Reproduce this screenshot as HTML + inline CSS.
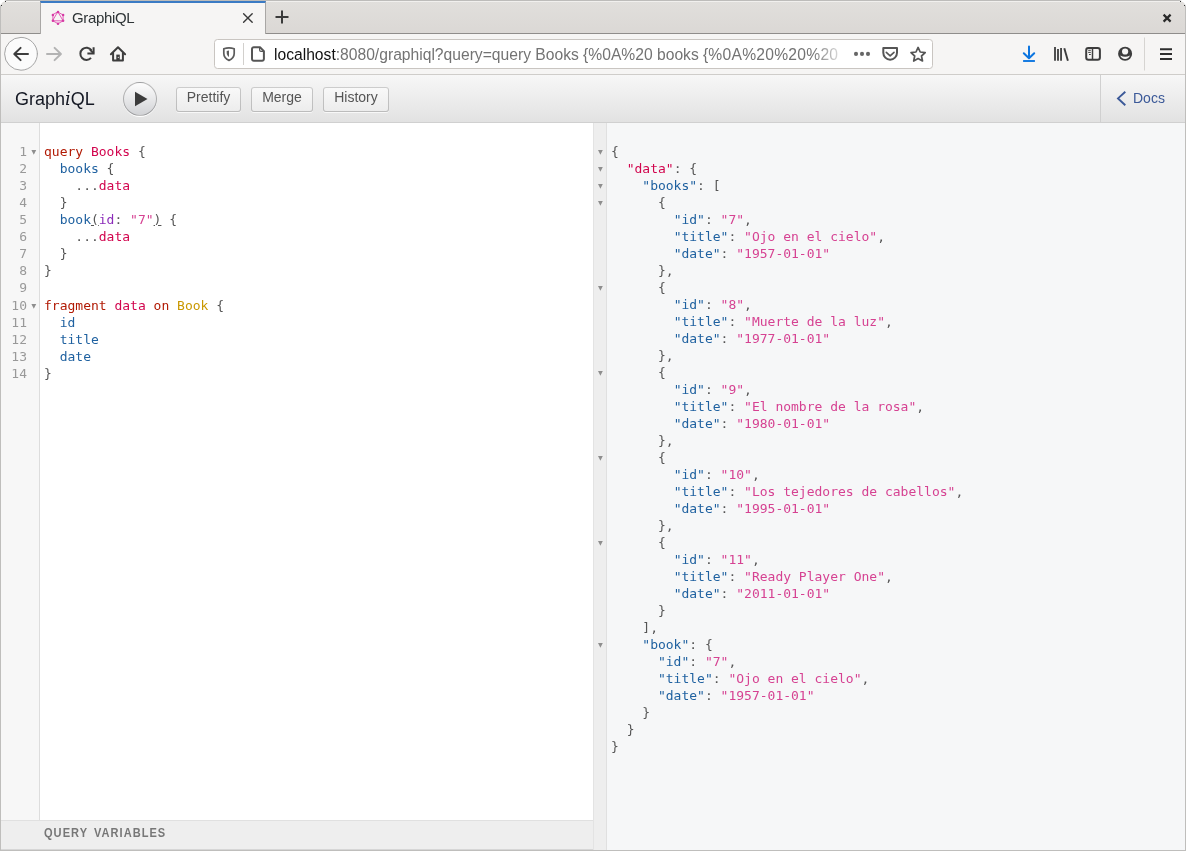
<!DOCTYPE html>
<html><head><meta charset="utf-8"><title>GraphiQL</title>
<style>
*{box-sizing:border-box;margin:0;padding:0}
html,body{width:1186px;height:851px;overflow:hidden;background:#fff;font-family:"Liberation Sans",sans-serif}
#win{position:absolute;left:0;top:0;width:1186px;height:851px;overflow:hidden;background:#fff;will-change:transform}
.abs{position:absolute}
/* browser chrome */
#tabbar{left:0;top:0;width:1186px;height:34px;background:linear-gradient(#e1dfdc,#dbd8d5);border-bottom:1px solid #8f8d8b;border-top:1px solid #bdbcba;box-shadow:inset 0 1px #f1f0ee}
#tab{left:40px;top:1px;width:226px;height:33px;background:#f6f5f4;border-top:2px solid #3b7bc4;border-left:1px solid #a9a7a5;border-right:1px solid #a9a7a5}
#tabtitle{left:72px;top:8.500px;font:15px "Liberation Sans",sans-serif;color:#2e3436;letter-spacing:-0.35px}
#navbar{left:0;top:34px;width:1186px;height:41px;background:#f6f5f4;border-bottom:1px solid #cfcdca}
#urlbar{left:214px;top:39px;width:719px;height:30px;background:#fff;border:1px solid #c9c5c1;border-radius:3.500px}
#url{left:274px;top:45.8px;width:574px;overflow:hidden;font:15.65px "Liberation Sans",sans-serif;color:#737373;white-space:pre}
#urlfade{left:812px;top:41px;width:34px;height:26px;background:linear-gradient(to right,rgba(255,255,255,0),rgba(255,255,255,.75) 80%,rgba(255,255,255,.9))}
#url b{font-weight:normal;color:#111}
/* graphiql */
#topbar{left:1px;top:75px;width:1184px;height:48px;background:linear-gradient(#f7f7f7,#e2e2e2);border-bottom:1px solid #d0d0d0}
#title{left:15px;top:88px;line-height:21px;font:18px "Liberation Sans",sans-serif;color:#141823}
#title em{font-family:"DejaVu Serif","Liberation Serif",serif}
.btn{top:87px;height:25px;border-radius:3px;background:linear-gradient(#f9f9f9,#ececec);box-shadow:inset 0 0 0 1px rgba(0,0,0,.2),0 1px 0 rgba(255,255,255,.7),inset 0 1px #fff;font:14px "Liberation Sans",sans-serif;color:#555;text-align:center;padding-top:2px}
#run{left:123px;top:82px;width:34px;height:34px;border-radius:17px;background:linear-gradient(#fdfdfd,#d2d3d6);border:1px solid rgba(0,0,0,.25);box-shadow:0 1px 0 #fff}
#docs{left:1100px;top:75px;width:85px;height:47px;border-left:1px solid #d0d0d0;font:14px "Liberation Sans",sans-serif;color:#3b5998}
#gutter{left:1px;top:123px;width:39px;height:697px;background:#f7f7f7;border-right:1px solid #ddd}
#editor{left:40px;top:123px;width:553px;height:697px;background:#fff}
#qv{left:1px;top:820px;width:592px;height:30px;background:#eeeeee;border-top:1px solid #e0e0e0;border-bottom:1px solid #d6d6d6}
#qvt{left:44px;top:826.100px;font:bold 12.400px "Liberation Sans",sans-serif;color:#777;letter-spacing:1.140px;word-spacing:2.300px;transform:scaleX(0.893);transform-origin:0 0;white-space:pre}
#result{left:593px;top:123px;width:592px;height:727px;background:#f6f7f8}
#rgutter{left:593px;top:123px;width:14px;height:727px;background:#eeeeee;border-right:1px solid #e0e0e0;border-left:1px solid #e3e3e3}
pre{position:absolute;font:13px/17px "DejaVu Sans Mono","Liberation Mono",monospace;color:#555;white-space:pre}
#ln{left:1px;top:143px;width:26px;text-align:right;color:#999}
#code{left:44px;top:143px}
#res{left:611px;top:143px}
.k{color:#B11A04}.d{color:#D2054E}.p{color:#1F61A0}.a{color:#8B2BB9}.s{color:#D64292}.t{color:#CA9800}.u{color:#555}.m{text-decoration:underline}.tall{display:inline-block;height:18px;vertical-align:top}
.f{position:absolute;font:8px "DejaVu Sans",sans-serif;color:#999}
#frame{left:0;top:0;width:1186px;height:851px;border:1px solid #bfbebc;border-top:none;pointer-events:none}
svg{position:absolute;overflow:visible}
</style></head><body><div id="win">
<div class="abs" id="tabbar"></div>
<div class="abs" id="tab"></div>
<div class="abs" id="tabtitle">GraphiQL</div>
<div class="abs" id="navbar"></div>
<div class="abs" id="urlbar"></div>
<svg style="left:0;top:0" width="1186" height="76" viewBox="0 0 1186 76" fill="none" stroke-linecap="round" stroke-linejoin="round">
<!-- favicon -->
<g stroke="#e24bb0" stroke-width="0.9" fill="none">
<polygon points="58,12.1 63.1,15 63.1,20.8 58,23.7 52.9,20.8 52.9,15"/>
<polygon points="58,12.1 63.1,20.8 52.9,20.8"/>
</g>
<g fill="#d63aa4" stroke="none"><circle cx="58" cy="12.1" r="1.25"/><circle cx="63.1" cy="15" r="1.25"/><circle cx="63.1" cy="20.8" r="1.25"/><circle cx="58" cy="23.7" r="1.25"/><circle cx="52.9" cy="20.8" r="1.25"/><circle cx="52.9" cy="15" r="1.25"/></g>
<!-- tab close -->
<path d="M243.6 13.7l8.6 8.6M252.2 13.7l-8.6 8.6" stroke="#3a3a3a" stroke-width="1.4"/>
<!-- new tab plus -->
<path d="M275.5 17h13M282 10.5v13" stroke="#3a3a3a" stroke-width="2" stroke-linecap="butt"/>
<!-- window close -->
<path d="M1163.6 14.6l7 7M1170.6 14.6l-7 7" stroke="#2a2a2a" stroke-width="2.2" stroke-linecap="butt"/>
<!-- back -->
<circle cx="21" cy="53.8" r="16.4" fill="#fbfbfb" stroke="#a5a5a5" stroke-width="1"/>
<path d="M28 54H14.6M20.6 47.9L14.3 54l6.3 6.1" stroke="#3d3d3d" stroke-width="2"/>
<!-- forward -->
<path d="M47 54h13.6M54.6 47.9L60.9 54l-6.3 6.1" stroke="#b3b3b3" stroke-width="2"/>
<!-- reload -->
<path d="M91.4 50.2A6.1 6.1 0 1 0 91 57.9" stroke="#3d3d3d" stroke-width="2" stroke-linecap="butt"/>
<path d="M93.6 47.3v6.1h-6.2" stroke="#3d3d3d" stroke-width="2" stroke-linecap="butt" stroke-linejoin="miter"/>
<path d="M93.6 53.4L90 49.6" stroke="#3d3d3d" stroke-width="2" stroke-linecap="butt"/>
<!-- home -->
<path d="M110.9 54.2L118 47.2l7.1 7" stroke="#3d3d3d" stroke-width="2"/>
<path d="M113.1 53v7.6h9.8V53" stroke="#3d3d3d" stroke-width="2"/>
<rect x="116.3" y="54.6" width="3.5" height="6" fill="#3d3d3d" stroke="none"/>
<circle cx="118.3" cy="57.4" r="0.6" fill="#ddd" stroke="none"/>
</svg>

<div class="abs" id="url"><b>localhost</b>:8080/graphiql?query=query Books {%0A%20 books {<span style="letter-spacing:0.25px">%0A%20%20%20</span></div>
<div class="abs" id="urlfade"></div>
<div class="abs" id="topbar"></div>

<svg style="left:0;top:0" width="1186" height="76" viewBox="0 0 1186 76" fill="none" stroke-linecap="round" stroke-linejoin="round">
<!-- shield -->
<path d="M223.800 48.800Q229 47.100 234.200 48.800V53.600C234.200 57 232 59.100 229 60.400C226 59.100 223.800 57 223.800 53.600z" stroke="#5c5c5c" stroke-width="1.700"/>
<path d="M229 50.400Q227.800 50.600 226.700 51V53C226.700 54.800 227.700 56 229 57z" fill="#5c5c5c" stroke="none"/>
<!-- separator -->
<path d="M243.500 43v22" stroke="#d2d0cd" stroke-width="1" stroke-linecap="butt"/>
<!-- page -->
<path d="M253.800 47.200h6.200l3.900 3.900v7.800a1.800 1.800 0 0 1 -1.800 1.800h-8.300a1.800 1.800 0 0 1 -1.800 -1.800v-9.900a1.800 1.800 0 0 1 1.800 -1.800z" stroke="#555" stroke-width="2"/>
<path d="M259.600 47.600v2.400a1.300 1.300 0 0 0 1.300 1.300h2.600" stroke="#555" stroke-width="1.200"/>
<!-- dots -->
<g fill="#666" stroke="none"><circle cx="856" cy="53.900" r="2.050"/><circle cx="862" cy="53.900" r="2.050"/><circle cx="868" cy="53.900" r="2.050"/></g>
<!-- pocket -->
<path d="M883.300 48h13.700v4.800a6.850 6.850 0 0 1 -13.700 0z" stroke="#555" stroke-width="2"/>
<path d="M886.300 52.400l3.850 3.500l3.850-3.500" stroke="#555" stroke-width="1.600"/>
<!-- star -->
<path d="M918.100 47.400l2.100 4.600l5 0.600l-3.700 3.400l1 5l-4.400-2.500l-4.400 2.500l1-5l-3.700-3.400l5-0.600z" stroke="#555" stroke-width="1.700"/>
<!-- download -->
<path d="M1029 46.600v11M1023.800 53.200l5.200 5.100l5.200-5.100" stroke="#0c75e0" stroke-width="2"/>
<path d="M1023.100 61h11.800" stroke="#0c75e0" stroke-width="1.900" stroke-linecap="butt"/>
<!-- library -->
<path d="M1055 47v13.800M1058 48.900v11.900M1061.050 48v12.800" stroke="#3d3d3d" stroke-width="1.800" stroke-linecap="butt"/>
<path d="M1064.300 48.300l3.600 12.400" stroke="#3d3d3d" stroke-width="1.900" stroke-linecap="butt"/>
<!-- sidebar -->
<rect x="1086.200" y="48" width="13.700" height="11.800" rx="2.200" stroke="#3d3d3d" stroke-width="2"/>
<path d="M1092.500 48.500v11" stroke="#3d3d3d" stroke-width="1.500" stroke-linecap="butt"/>
<path d="M1088.200 50.300h2.600M1088.200 52.400h2.600M1089 54.500h1.800" stroke="#3d3d3d" stroke-width="1" stroke-linecap="butt"/>
<!-- account -->
<circle cx="1125.100" cy="53.800" r="7" fill="#3d3d3d" stroke="none"/>
<circle cx="1125.100" cy="51.500" r="3.100" fill="#f6f5f4" stroke="none"/>
<path d="M1120.220 55.500A5.200 5.200 0 0 0 1129.980 55.500A10.500 10.500 0 0 1 1120.220 55.500z" fill="#f6f5f4" stroke="none"/>
<!-- separator -->
<path d="M1144.500 37.500v33" stroke="#d6d4d1" stroke-width="1" stroke-linecap="butt"/>
<!-- hamburger -->
<path d="M1160 49.300h12M1160 54.100h12M1160 58.900h12" stroke="#2e2e2e" stroke-width="2" stroke-linecap="butt"/>
</svg>

<div class="abs" id="title">Graph<em><i>i</i></em>QL</div>
<div class="abs" id="run"></div>
<svg style="left:0;top:75px" width="1186" height="48" viewBox="0 75 1186 48"><path d="M135 91.800v14.400l12.500-7.200z" fill="#3c3c3c"/><path d="M1125.300 91.700l-7.300 6.700l7.300 6.900" fill="none" stroke="#3b5998" stroke-width="1.900" stroke-linecap="butt" stroke-linejoin="miter"/></svg>
<div class="abs btn" style="left:176px;width:65px">Prettify</div>
<div class="abs btn" style="left:251px;width:62px">Merge</div>
<div class="abs btn" style="left:323px;width:66px">History</div>
<div class="abs" id="docs"><span class="abs" style="left:32px;top:14.500px">Docs</span></div>
<div class="abs" id="gutter"></div>
<div class="abs" id="editor"></div>
<div class="abs" id="result"></div>
<div class="abs" id="rgutter"></div>
<div class="abs" id="qv"></div>
<div class="abs" id="qvt">QUERY VARIABLES</div>
<svg style="left:0;top:123px" width="1186" height="728" viewBox="0 123 1186 728"><path d="M31.4 150.1h4.800l-2.400 4.600zM31.4 304.1h4.800l-2.400 4.600zM598.0 150.1h4.800l-2.400 4.600zM598.0 167.1h4.800l-2.400 4.600zM598.0 184.1h4.800l-2.400 4.600zM598.0 201.1h4.800l-2.400 4.600zM598.0 286.1h4.800l-2.400 4.600zM598.0 371.1h4.800l-2.400 4.600zM598.0 456.1h4.800l-2.400 4.600zM598.0 541.1h4.800l-2.400 4.600zM598.0 643.1h4.800l-2.400 4.600z" fill="#8e8e8e"/></svg>
<pre id="ln">1
2
3
4
5
6
7
8
<span class="tall">9</span>
10
11
12
13
14</pre>
<pre id="code"><span class="k">query</span> <span class="d">Books</span> {
  <span class="p">books</span> {
    ...<span class="d">data</span>
  }
  <span class="p">book</span><span class="m">(</span><span class="a">id</span>: <span class="s">"7"</span><span class="m">)</span> {
    ...<span class="d">data</span>
  }
}
<span class="tall"></span>
<span class="k">fragment</span> <span class="d">data</span> <span class="k">on</span> <span class="t">Book</span> {
  <span class="p">id</span>
  <span class="p">title</span>
  <span class="p">date</span>
}</pre>
<pre id="res">{
  <span class="d">"data"</span>: {
    <span class="p">"books"</span>: [
      {
        <span class="p">"id"</span>: <span class="s">"7"</span>,
        <span class="p">"title"</span>: <span class="s">"Ojo en el cielo"</span>,
        <span class="p">"date"</span>: <span class="s">"1957-01-01"</span>
      },
      {
        <span class="p">"id"</span>: <span class="s">"8"</span>,
        <span class="p">"title"</span>: <span class="s">"Muerte de la luz"</span>,
        <span class="p">"date"</span>: <span class="s">"1977-01-01"</span>
      },
      {
        <span class="p">"id"</span>: <span class="s">"9"</span>,
        <span class="p">"title"</span>: <span class="s">"El nombre de la rosa"</span>,
        <span class="p">"date"</span>: <span class="s">"1980-01-01"</span>
      },
      {
        <span class="p">"id"</span>: <span class="s">"10"</span>,
        <span class="p">"title"</span>: <span class="s">"Los tejedores de cabellos"</span>,
        <span class="p">"date"</span>: <span class="s">"1995-01-01"</span>
      },
      {
        <span class="p">"id"</span>: <span class="s">"11"</span>,
        <span class="p">"title"</span>: <span class="s">"Ready Player One"</span>,
        <span class="p">"date"</span>: <span class="s">"2011-01-01"</span>
      }
    ],
    <span class="p">"book"</span>: {
      <span class="p">"id"</span>: <span class="s">"7"</span>,
      <span class="p">"title"</span>: <span class="s">"Ojo en el cielo"</span>,
      <span class="p">"date"</span>: <span class="s">"1957-01-01"</span>
    }
  }
}</pre>
<div class="abs" id="frame"></div>
<svg style="left:0;top:0" width="1186" height="10" viewBox="0 0 1186 10"><path d="M0 0H6.500Q1.500 1.500 0 6.500z" fill="#fff"/><path d="M1186 0h-6.500q5 1.500 6.500 6.500z" fill="#fff"/><g fill="#333"><rect x="5" y="1" width="1" height="1"/><rect x="1" y="5" width="1" height="1"/><rect x="1180" y="1" width="1" height="1"/><rect x="1184" y="5" width="1" height="1"/></g></svg>
</div></body></html>
